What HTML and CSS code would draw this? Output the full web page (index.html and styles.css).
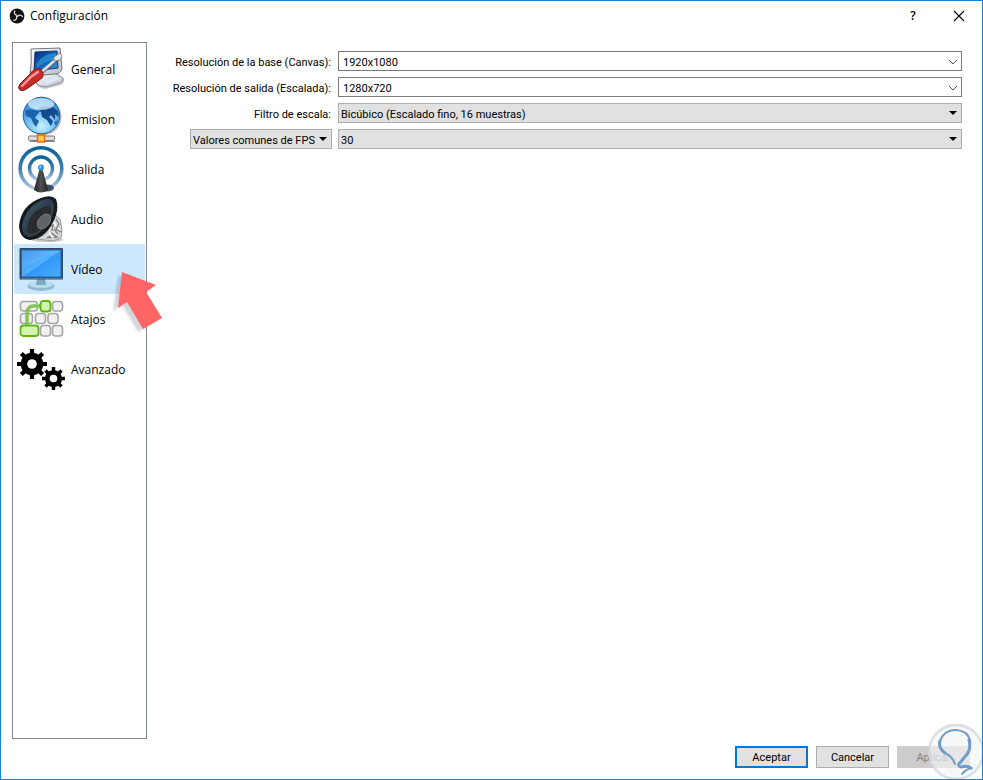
FILE: index.html
```html
<!DOCTYPE html>
<html lang="es">
<head>
<meta charset="utf-8">
<title>Configuración</title>
<link rel="stylesheet" href="styles.css">
</head>
<body>
<div class="window">
  <header class="titlebar">
    <svg class="logo" viewBox="0 0 16 16" aria-hidden="true">
      <circle cx="8" cy="8" r="7.4" fill="#111"/>
      <g fill="none" stroke="#ddd" stroke-width="1.3" stroke-linecap="round">
        <path d="M8 7.4C5.6 7 4.8 5 5.8 3"/>
        <path d="M8 7.4C5.6 7 4.8 5 5.8 3" transform="rotate(120 8 8)"/>
        <path d="M8 7.4C5.6 7 4.8 5 5.8 3" transform="rotate(240 8 8)"/>
      </g>
    </svg>
    <h1 class="title">Configuración</h1>
    <button class="caption-button" type="button" aria-label="Ayuda">?</button>
    <button class="caption-button" type="button" aria-label="Cerrar">
      <svg class="close" viewBox="0 0 12 12"><path d="M1 1L11 11M11 1L1 11" stroke="#000" stroke-width="1.1"/></svg>
    </button>
  </header>

  <div class="content">
    <nav class="sidebar">
      <a class="item" href="#general">
        <svg class="icon" viewBox="0 0 48 48" aria-hidden="true">
          <defs>
            <linearGradient id="screenBlue" x1="0" y1="0" x2="1" y2="1"><stop offset="0" stop-color="#0a2a80"/><stop offset=".5" stop-color="#0d62b5"/><stop offset="1" stop-color="#35a8e8"/></linearGradient>
            <linearGradient id="plastic" x1="0" y1="0" x2="1" y2="1"><stop offset="0" stop-color="#fff"/><stop offset="1" stop-color="#b8bec8"/></linearGradient>
          </defs>
          <path d="M22 30L39 28L47 34Q48 38 44 40L29 44Q22 44 19 39Z" fill="#777" opacity=".35"/>
          <path d="M23 29L38 28L46 33Q47 36 43 38L29 42Q22 42 19 38Z" fill="url(#plastic)" stroke="#8d929a"/>
          <path d="M27 35L38 32L43 34L30 39Z" fill="#dbe9fa"/>
          <path d="M14 4L43 3L45 24Q43 29 38 29L13 31Q15 16 14 4Z" fill="url(#plastic)" stroke="#70757e"/>
          <path d="M18 7L40 6L41 23L17 26Z" fill="url(#screenBlue)" stroke="#17346d"/>
          <path d="M20 18Q27 8 39 8L40 15Q29 14 20 23Z" fill="#38a6e5" opacity=".55"/>
          <path d="M25 27L40 14" stroke="#666" stroke-width="4"/>
          <path d="M25 26.5L40 13.5" stroke="#dfe3e8" stroke-width="2.4"/>
          <path d="M37 16L37 12L43 8L45 11L43 15Z" fill="#e6e9ed" stroke="#777" stroke-width=".8"/>
          <path d="M3 39L13 29Q18 22 23 24Q28 28 25 33L11 43Q6 47 3 45Q0 43 3 39Z" fill="#c92b2b" stroke="#7d1717"/>
          <path d="M5 41L15 31L21 27" fill="none" stroke="#ff9d94" stroke-width="2.4" stroke-linecap="round"/>
        </svg>
        <span class="name">General</span>
      </a>
      <a class="item" href="#emision">
        <svg class="icon" viewBox="0 0 48 48" aria-hidden="true">
          <defs><radialGradient id="ocean" cx=".5" cy=".8" r=".8"><stop offset="0" stop-color="#c5f4ff"/><stop offset=".5" stop-color="#6fbcf0"/><stop offset="1" stop-color="#2b77cb"/></radialGradient></defs>
          <circle cx="26" cy="22" r="18.5" fill="#777" opacity=".5"/>
          <circle cx="24.500" cy="20.5" r="18.300" fill="url(#ocean)" stroke="#1b5fae"/>
          <path d="M8 16Q11 13 18 15L23 16L20 20L18 23L22 26L19 32L16 28L14 23L9 21Z" fill="#1d62ac"/>
          <path d="M21 14Q25 10 36 12L41 16L42 22L38 19L38 25L34 20L32 22L36 26L34 31L30 25L25 22L24 17Z" fill="#124b8e"/>
          <path d="M37 27L41 25L39 31Z" fill="#1d62ac"/>
          <ellipse cx="24" cy="9" rx="13" ry="6" fill="#d9f2ff" opacity=".75"/>
          <path d="M24 38V42" stroke="#777" stroke-width="3"/>
          <rect x="11.500" y="41" width="26" height="4.500" rx="1" fill="#ddd" stroke="#777"/>
          <path d="M13 46.500H38" stroke="#888"/>
          <rect x="20.500" y="40" width="7" height="7" fill="#ffc94d" stroke="#e36b20" stroke-width="1.500"/>
        </svg>
        <span class="name">Emision</span>
      </a>
      <a class="item" href="#salida">
        <svg class="icon" viewBox="0 0 48 48" aria-hidden="true">
          <defs>
            <linearGradient id="wave" x1="0" y1="0" x2="0" y2="1"><stop offset="0" stop-color="#08639a"/><stop offset=".5" stop-color="#3f7fa8"/><stop offset="1" stop-color="#b7c9e5"/></linearGradient>
            <linearGradient id="cone"><stop offset="0" stop-color="#222"/><stop offset=".5" stop-color="#505050"/><stop offset="1" stop-color="#222"/></linearGradient>
          </defs>
          <circle cx="24" cy="23.500" r="20.800" fill="none" stroke="url(#wave)" stroke-width="3.600"/>
          <circle cx="24" cy="23.500" r="11.500" fill="none" stroke="url(#wave)" stroke-width="3.400"/>
          <ellipse cx="30" cy="43" rx="7" ry="3.500" fill="#24374c" opacity=".85"/>
          <path d="M22.500 24H25.500L31 45Q24 50 17 45Z" fill="url(#cone)"/>
          <circle cx="24" cy="22.500" r="3" fill="#3394f2"/>
          <circle cx="23.300" cy="21.700" r="1" fill="#b2dcff"/>
        </svg>
        <span class="name">Salida</span>
      </a>
      <a class="item" href="#audio">
        <svg class="icon" viewBox="0 0 48 48" aria-hidden="true">
          <defs>
            <linearGradient id="rubber" x1="0" y1="0" x2="1" y2="1"><stop offset="0" stop-color="#46627a"/><stop offset=".5" stop-color="#2a3d4e"/><stop offset="1" stop-color="#555"/></linearGradient>
          </defs>
          <ellipse cx="30" cy="45" rx="16" ry="2" fill="#999" opacity=".5"/>
          <path d="M36 18L43 24L45 34L44 43L36 46L20 44Z" fill="#d4d4d6" stroke="#9b9b9d"/>
          <path d="M31 32L36 30L35 36M39 24L42 29L39 34L44 37M34 38L40 42L30 43L35 40M37 34L41 39" fill="none" stroke="#777" stroke-width="1.200"/>
          <path d="M37 27L39 31M32 37L36 43M41 33L43 35" stroke="#fff" stroke-width="1.600"/>
          <path d="M2 31Q4 10 24 3Q34 -1 39 4Q43 15 35 29Q27 44 13 45Q3 44 2 31Z" fill="#181b1e"/>
          <path d="M5 31Q8 14 23 6Q32 2 36 6Q39 15 32 27Q24 39 13 42Q5 41 5 31Z" fill="url(#rubber)"/>
          <path d="M10 34Q11 21 22 14Q31 9 34 13Q35 20 29 28Q22 38 14 39Q10 38 10 34Z" fill="#292b2d"/>
          <ellipse cx="27" cy="26.500" rx="8.500" ry="5.500" transform="rotate(-52 27 26.500)" fill="#606468" stroke="#888" stroke-width=".7"/>
        </svg>
        <span class="name">Audio</span>
      </a>
      <a class="item selected" href="#video" aria-current="page">
        <svg class="icon" viewBox="0 0 48 48" aria-hidden="true">
          <defs><linearGradient id="lcd" x1="0" y1="0" x2="1" y2="1"><stop offset="0" stop-color="#2c8bea"/><stop offset=".5" stop-color="#51b0ff"/><stop offset=".52" stop-color="#3197f6"/><stop offset="1" stop-color="#4badff"/></linearGradient></defs>
          <ellipse cx="24" cy="41" rx="13.500" ry="5" fill="#8fbad3"/>
          <ellipse cx="24" cy="39.500" rx="12" ry="3.500" fill="#b7ddec"/>
          <path d="M20 34H28L29 40H19Z" fill="#7ca8bd"/>
          <rect x="2.500" y="3" width="43.500" height="31.500" rx="1" fill="#34495e"/>
          <rect x="4.500" y="5" width="39.500" height="27" fill="url(#lcd)" stroke="#1d69bb"/>
          <path d="M5 5.500H43.500L5 23Z" fill="#fff" opacity=".1"/>
          <path d="M4 33.500H45" stroke="#61758a"/>
        </svg>
        <span class="name">Vídeo</span>
        <svg class="pointer" viewBox="0 0 56 64" aria-hidden="true">
          <path d="M6 6L39 19L29 26L45 52L26 63L10 36L1 42Z" fill="#506070" opacity=".25" class="pointer-shadow"/>
          <path d="M10 3L44 16L34 23L50 49L31 60L15 33L6 39Z" fill="#ff6565"/>
        </svg>
      </a>
      <a class="item" href="#atajos">
        <svg class="icon" viewBox="0 0 48 48" aria-hidden="true">
          <g fill="#f1f1f1" stroke="#a5a5a5" stroke-width="1.600">
            <rect x="3.500" y="6.500" width="17" height="9.500" rx="3"/>
            <rect x="35.500" y="6.500" width="10" height="9.500" rx="3"/>
            <rect x="3.500" y="18.500" width="12" height="10" rx="3"/>
            <rect x="18.500" y="18.500" width="10" height="10" rx="3"/>
            <rect x="31" y="18.500" width="10" height="10" rx="3"/>
            <rect x="23.500" y="30.500" width="10" height="10.500" rx="3"/>
            <rect x="35.500" y="30.500" width="10" height="10.500" rx="3"/>
          </g>
          <path d="M23 11H17Q10 11 10 19V31" fill="none" stroke="#86c655" stroke-width="3.600"/>
          <g fill="#d2f5ad" stroke="#60b51b" stroke-width="1.800">
            <rect x="23.500" y="6" width="10" height="10.500" rx="3"/>
            <rect x="3.500" y="30.500" width="18" height="10.500" rx="3"/>
          </g>
        </svg>
        <span class="name">Atajos</span>
      </a>
      <a class="item" href="#avanzado">
        <svg class="icon" viewBox="0 0 48 48" aria-hidden="true">
          <path d="M15 4V34M0 19H30M4.400 8.400L25.600 29.600M25.600 8.400L4.400 29.600" stroke="#000" stroke-width="4.200"/>
          <circle cx="15" cy="19" r="11.300"/>
          <circle cx="15" cy="19" r="4.800" fill="#fff"/>
          <path d="M36.500 22V45M25 33.500H48M28.500 25.500L44.500 41.500M44.500 25.500L28.500 41.500" stroke="#000" stroke-width="3.400"/>
          <circle cx="36.500" cy="33.500" r="8.600"/>
          <circle cx="36.500" cy="33.500" r="3.800" fill="#fff"/>
        </svg>
        <span class="name">Avanzado</span>
      </a>
    </nav>

    <form class="settings">
      <label class="caption" for="base">Resolución de la base (Canvas):</label>
      <div class="combo editable">
        <select id="base"><option>1920x1080</option></select>
        <svg class="chevron" viewBox="0 0 10 6" aria-hidden="true"><path d="M1 1L5 5L9 1" fill="none" stroke="#555"/></svg>
      </div>
      <label class="caption" for="output">Resolución de salida (Escalada):</label>
      <div class="combo editable">
        <select id="output"><option>1280x720</option></select>
        <svg class="chevron" viewBox="0 0 10 6" aria-hidden="true"><path d="M1 1L5 5L9 1" fill="none" stroke="#555"/></svg>
      </div>
      <label class="caption" for="filter">Filtro de escala:</label>
      <div class="combo">
        <select id="filter"><option>Bicúbico (Escalado fino, 16 muestras)</option></select>
        <svg class="triangle" viewBox="0 0 8 4" aria-hidden="true"><path d="M0 0H8L4 4Z"/></svg>
      </div>
      <div class="combo fps-type">
        <select aria-label="Tipo de FPS"><option>Valores comunes de FPS</option></select>
        <svg class="triangle" viewBox="0 0 8 4" aria-hidden="true"><path d="M0 0H8L4 4Z"/></svg>
      </div>
      <div class="combo">
        <select aria-label="FPS"><option>30</option></select>
        <svg class="triangle" viewBox="0 0 8 4" aria-hidden="true"><path d="M0 0H8L4 4Z"/></svg>
      </div>
    </form>
  </div>

  <footer class="actions">
    <button class="button primary" type="button">Aceptar</button>
    <button class="button" type="button">Cancelar</button>
    <button class="button" type="button" disabled>Aplicar</button>
  </footer>

  <svg class="watermark" viewBox="0 0 56 57" aria-hidden="true">
    <circle cx="29" cy="29" r="27" fill="#f4f4f6" fill-opacity=".65" stroke="#d5d5dc" stroke-opacity=".8" stroke-width="2.400"/>
    <g fill="none" stroke="#6f9cc8" stroke-linecap="round">
      <path stroke-width="2" d="M28 41Q26 34 18 30Q11 25 13 18Q17 7 28 7Q40 7 43 17Q44 24 41 30L32 41Q30 44 34 44Q40 42 44 45Q38 47 35 51"/>
      <path stroke-width="3" d="M18 30Q11 25 13 18M42 17Q44 24 41 30L32 41M34 44Q40 42 44 45"/>
    </g>
  </svg>
</div>
</body>
</html>
```
FILE: styles.css
```css
* {
  box-sizing: border-box;
}

body {
  margin: 0;
  background: #fff;
  color: #000;
  font: 12px/16px "Open Sans", "Noto Sans", sans-serif;
}

.window {
  position: relative;
  display: flex;
  flex-direction: column;
  min-height: 100vh;
  overflow: hidden;
  border: 1px solid #1a80d5;
}

.titlebar {
  display: flex;
  align-items: center;
  height: 29px;
  padding-left: 8px;
}

.logo {
  width: 16px;
  height: 16px;
}

.title {
  flex: 1;
  margin: 0 0 0 5px;
  font-size: 12px;
  font-weight: 400;
}

.caption-button {
  display: flex;
  align-items: center;
  justify-content: center;
  width: 46px;
  height: 28px;
  padding: 0;
  border: 0;
  background: none;
  color: #000;
  font: inherit;
  font-weight: 600;
}

.close {
  width: 12px;
  height: 12px;
}

.content {
  display: flex;
  flex: 1;
  padding: 12px 20px 0 11px;
}

.sidebar {
  flex: none;
  width: 135px;
  padding: 1px;
  border: 1px solid #828790;
}

.item {
  position: relative;
  display: flex;
  align-items: center;
  gap: 6px;
  height: 50px;
  padding-left: 3px;
  color: #000;
  text-decoration: none;
}

.name {
  padding-top: 2px;
}

.selected {
  background: #cce8ff;
}

.icon {
  flex: none;
  width: 48px;
  height: 48px;
}

.pointer {
  position: absolute;
  z-index: 1;
  top: 25px;
  left: 98px;
  width: 56px;
  height: 64px;
}

.pointer-shadow {
  filter: blur(1px);
}

.settings {
  display: grid;
  flex: 1;
  grid-template-columns: 155px 1fr;
  grid-auto-rows: 20px;
  align-content: start;
  gap: 6px;
  padding: 9px 0 0 30px;
  font-family: Roboto, "Liberation Sans", sans-serif;
  font-size: 11px;
}

.caption {
  justify-self: end;
  padding-right: 1px;
  line-height: 24px;
  white-space: nowrap;
}

.combo {
  position: relative;
}

.combo select {
  display: block;
  width: 100%;
  height: 20px;
  padding: 3px 14px 0 2px;
  border: 1px solid #adadad;
  border-radius: 0;
  appearance: none;
  background: #e1e1e1;
  color: #000;
  font: inherit;
}

.editable select {
  padding-left: 4px;
  border-color: #7a7a7a;
  background: #fff;
}

.fps-type {
  justify-self: end;
  width: 142px;
}

.chevron,
.triangle {
  position: absolute;
  pointer-events: none;
}

.chevron {
  top: 8px;
  right: 4px;
  width: 10px;
  height: 6px;
}

.triangle {
  top: 8px;
  right: 5px;
  width: 8px;
  height: 4px;
}

.actions {
  display: flex;
  justify-content: flex-end;
  gap: 8px;
  padding: 7px 12px 11px;
}

.button {
  width: 73px;
  height: 22px;
  padding: 2px 0 0;
  border: 1px solid #adadad;
  background: #e1e1e1;
  color: #000;
  font: 11px/16px Roboto, "Liberation Sans", sans-serif;
}

.primary {
  border: 2px solid #0078d7;
}

.button:disabled {
  border-color: #ccc;
  background: #ccc;
  color: #838383;
}

.watermark {
  position: absolute;
  right: -1px;
  bottom: -1px;
  width: 56px;
  height: 57px;
}
```
